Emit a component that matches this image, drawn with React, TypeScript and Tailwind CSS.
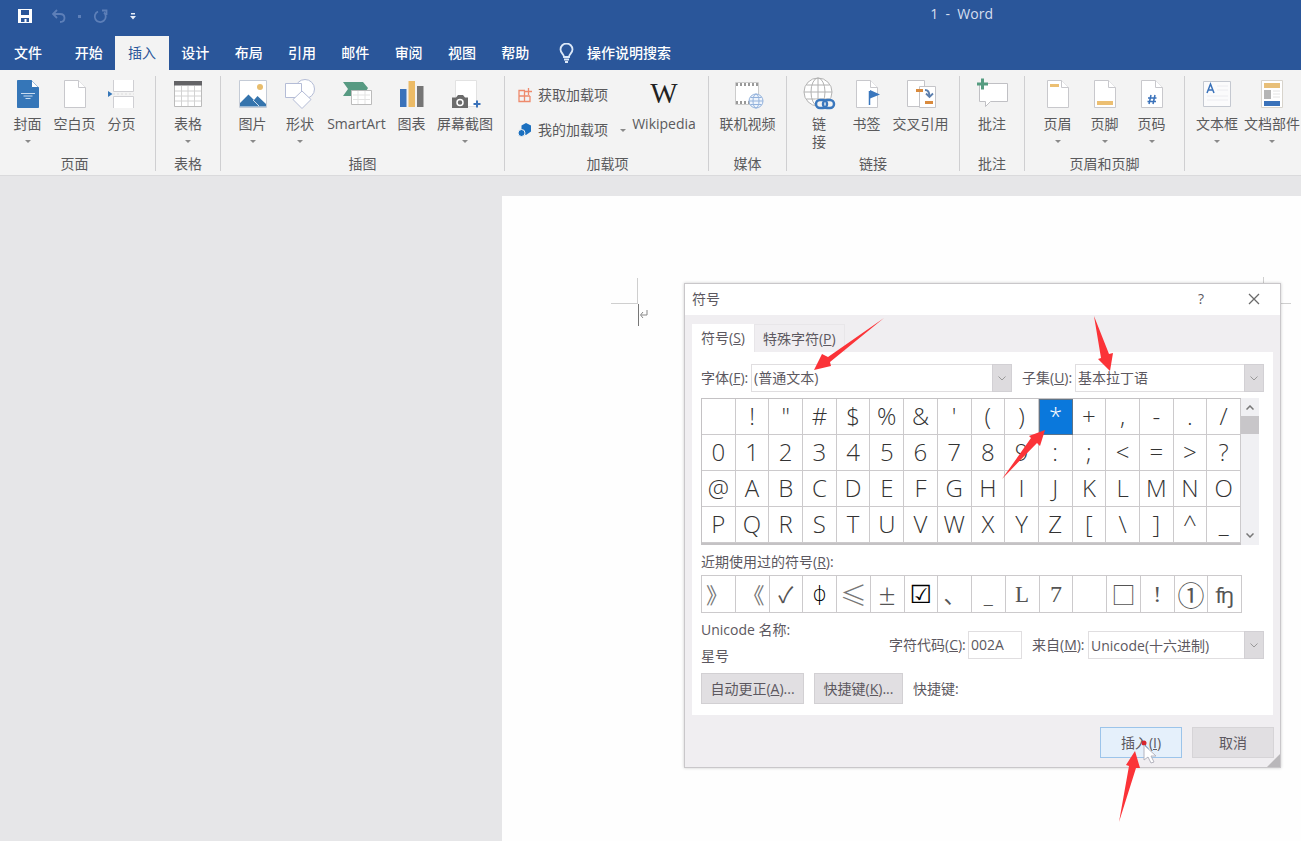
import React, { useState } from 'react';

const menuTabs = ['开始', '插入', '设计', '布局', '引用', '邮件', '审阅', '视图', '帮助'];

const symbols = ' !"#$%&\'()*+,-./0123456789:;<=>?@ABCDEFGHIJKLMNOPQRSTUVWXYZ[\\]^_'.split('');

interface RecentSymbol {
  char: string;
  className?: string;
}

const recentSymbols: RecentSymbol[] = [
  { char: '》', className: 'justify-start pl-1 text-[22px] text-[#777]' },
  { char: '《', className: 'justify-end pr-1 text-[22px] text-[#777]' },
  { char: '✓', className: 'text-[22px] text-[#333]' },
  { char: 'ɸ', className: "font-['DejaVu_Sans',sans-serif] text-[22px] font-extralight text-black" },
  { char: '≤', className: "font-['Noto_Sans_CJK_SC',sans-serif] text-[27px] font-light text-[#777]" },
  { char: '±', className: 'text-[30px] font-light' },
  { char: '☑', className: "font-['DejaVu_Sans',sans-serif] text-[25px] text-black" },
  { char: '、', className: 'text-[22px] text-[#222]' },
  { char: '_', className: 'text-[22px] font-light' },
  { char: 'L', className: "font-['Liberation_Serif',serif] text-[23px]" },
  { char: '7', className: "font-['Liberation_Serif',serif] text-[24px]" },
  { char: '' },
  { char: '□', className: "font-['Noto_Sans_CJK_SC',sans-serif] text-[24px]" },
  { char: '!', className: "font-['Liberation_Serif',serif] text-[24px]" },
  { char: '①', className: "font-['Noto_Sans_CJK_SC',sans-serif] text-[27px]" },
  { char: 'ʩ', className: "font-['Open_Sans','Noto_Sans',sans-serif] text-[22px] text-[#222]" },
];

const FoldedPage = ({ fill = '#fff', stroke = '#c8c8cc', children }: { fill?: string; stroke?: string; children?: React.ReactNode }) => (
  <svg width="30" height="32" viewBox="0 0 30 32" fill="none">
    <path d="M4.500 2.500h14l7 7v20h-21z" fill={fill} stroke={stroke} />
    <path d="M18.500 2.500v7h7" fill="#fff" stroke={stroke} />
    {children}
  </svg>
);

const CoverIcon = () => (
  <FoldedPage fill="#3576b8" stroke="#3576b8">
    <path d="M8 15.500h14M10.500 18h9M12.500 20.500h5" stroke="#c9dcf0" />
  </FoldedPage>
);

const PageBreakIcon = () => (
  <svg width="30" height="32" viewBox="0 0 30 32" fill="none">
    <path d="M6.500 2v11.500h20V2M6.500 30V18.500h20V30" fill="#fff" stroke="#cfcfd3" />
    <path d="M6 16h21" stroke="#ddd" strokeDasharray="2 2" />
    <path d="M1 13l4.500 3L1 19z" fill="#3576b8" />
  </svg>
);

const TableIcon = () => (
  <svg width="30" height="32" viewBox="0 0 30 32" fill="none">
    <path d="M1.500 3.500h27v25h-27z" fill="#fff" stroke="#bbb" />
    <path d="M1 3h28v4.500H1z" fill="#636366" />
    <path d="M2 13h26M2 18h26M2 23h26M8.500 8v20M15 8v20M21.500 8v20" stroke="#d2d2d2" />
  </svg>
);

const PictureIcon = () => (
  <svg width="30" height="32" viewBox="0 0 30 32" fill="none">
    <path d="M1.500 2.500h27v27h-27z" fill="#fff" stroke="#c4cbd6" />
    <circle cx="22" cy="9" r="3" fill="#e8bd6d" />
    <path d="M2 28.500V25l8.500-8.500 5.500 5.500 3.500-4 8.500 8v2.500z" fill="#3574ad" />
    <path d="M15 22l6 6" stroke="#cfe0ee" />
  </svg>
);

const ShapesIcon = () => (
  <svg width="32" height="32" viewBox="0 0 32 32" fill="#fff" stroke="#b4bcd6">
    <circle cx="21" cy="11" r="9.500" />
    <path d="M1.500 5.500h16v14h-16z" />
    <path d="M18 13l9 8.500-9 9-9-9z" />
  </svg>
);

const SmartArtIcon = () => (
  <svg width="32" height="32" viewBox="0 0 32 32" fill="none">
    <path d="M2 4h20l5 6-5 8H2l5-7z" fill="#579a82" />
    <path d="M10.500 12.500h20v14h-20z" fill="#fff" stroke="#bbb" />
    <path d="M12 17h17M12 21.500h17M17 13v13M24 13v13" stroke="#e3e3e3" />
  </svg>
);

const ChartIcon = () => (
  <svg width="30" height="32" viewBox="0 0 30 32">
    <path d="M3 11h6.500v18H3z" fill="#3a72ba" />
    <path d="M11.500 3H18v26h-6.500z" fill="#ecbb66" />
    <path d="M20 8h6.500v21H20z" fill="#757575" />
  </svg>
);

const ScreenshotIcon = () => (
  <svg width="32" height="32" viewBox="0 0 32 32" fill="none">
    <path d="M6.500 2.500h21v26h-21z" fill="#fff" stroke="#e2e2e2" />
    <path d="M3 19.500h4l2-2.500h5l2 2.500h3V30H3z" fill="#6b6b6b" />
    <circle cx="11" cy="24.500" r="3" stroke="#fff" strokeWidth="1.500" />
    <path d="M24.500 26h7M28 22.500v7" stroke="#3a72ba" strokeWidth="2" />
  </svg>
);

const VideoIcon = () => (
  <svg width="32" height="32" viewBox="0 0 32 32" fill="none">
    <path d="M3.500 4.500h23v22h-23z" fill="#fff" stroke="#ccc" />
    <path d="M4 6.500h22M4 24.500h22" stroke="#999" strokeWidth="3" strokeDasharray="2 2" />
    <g stroke="#93b2dc">
      <circle cx="24" cy="23" r="7" fill="#eef4fc" />
      <ellipse cx="24" cy="23" rx="3" ry="7" />
      <path d="M17 23h14M18.500 19.500h11M18.500 26.500h11" />
    </g>
  </svg>
);

const LinkIcon = () => (
  <svg width="34" height="34" viewBox="0 0 34 34" fill="none">
    <g stroke="#b2b2b2">
      <circle cx="16" cy="15" r="14" fill="#fff" />
      <ellipse cx="16" cy="15" rx="7" ry="14" />
      <path d="M2 15h28M4.500 8h23M4.500 22h23M16 1v28" />
    </g>
    <path d="M13 22.500h18v9H13z" fill="#f3f3f3" />
    <g stroke="#3a77bd" strokeWidth="2.500">
      <rect x="14" y="23" width="11" height="8" rx="4" />
      <rect x="21" y="23" width="11" height="8" rx="4" />
    </g>
  </svg>
);

const BookmarkIcon = () => (
  <FoldedPage>
    <path d="M17.500 13v14" stroke="#3a77bd" strokeWidth="1.500" />
    <path d="M18 12l10 4.500-10 4z" fill="#3a77bd" />
  </FoldedPage>
);

const CrossRefIcon = () => (
  <svg width="32" height="32" viewBox="0 0 32 32" fill="none">
    <path d="M2.500 2.500h17v26h-17z" fill="#fff" stroke="#c4c4c8" />
    <path d="M14.500 8.500h16v21h-16z" fill="#fff" stroke="#c4c4c8" />
    <path d="M11 12.500h7M20 24.500h8" stroke="#d98a3d" strokeWidth="3" />
    <path d="M20 12c3 0 4.500 2 4.500 6.500M21 15.500l3.500 3.500 3.500-3.500" stroke="#5c7fae" strokeWidth="1.800" />
  </svg>
);

const CommentIcon = () => (
  <svg width="34" height="32" viewBox="0 0 34 32" fill="none">
    <path d="M4.500 5.500h28v18h-17l-5 5v-5h-6z" fill="#fff" stroke="#c0c0c4" />
    <path d="M2 6h11M7.500.500v11" stroke="#559c80" strokeWidth="3" />
  </svg>
);

const HeaderIcon = () => (
  <FoldedPage>
    <path d="M7 7.500h9" stroke="#ecbf72" strokeWidth="3" />
  </FoldedPage>
);

const FooterIcon = () => (
  <FoldedPage>
    <path d="M7 25h16" stroke="#ecbf72" strokeWidth="4" />
  </FoldedPage>
);

const PageNumberIcon = () => (
  <FoldedPage>
    <path d="M14 17l-2 9M18 17l-2 9M11 20h8.500M10.500 23.500H19" stroke="#3a72ba" strokeWidth="1.500" />
  </FoldedPage>
);

const TextBoxIcon = () => (
  <svg width="32" height="32" viewBox="0 0 32 32" fill="none">
    <path d="M2.500 3.500h27v25h-27z" fill="#fbfbfc" stroke="#c4c8d0" />
    <path d="M6 15l3.500-9 3.500 9M7.300 12h4.500" stroke="#3a72ba" strokeWidth="1.500" />
    <path d="M16 8h11M16 12h11M6 18h21M6 22h21" stroke="#ececf0" />
  </svg>
);

const QuickPartsIcon = () => (
  <svg width="30" height="32" viewBox="0 0 30 32" fill="none">
    <path d="M4.500 2.500h21v27h-21z" fill="#fff" stroke="#d8d4cc" />
    <path d="M7 5h16v5H7z" fill="#e8bf78" />
    <path d="M7 12h7v9H7z" fill="#b5b5b5" />
    <path d="M16 13h7M16 16h7M16 19h7" stroke="#e4e4e4" />
    <path d="M7 23h16v5H7z" fill="#3a72ba" />
  </svg>
);

interface RibbonButtonProps {
  label: string;
  width: string;
  icon: React.ReactNode;
  caret?: boolean;
}

const RibbonButton: React.FC<RibbonButtonProps> = ({ label, width, icon, caret }) => (
  <button className={`flex flex-col items-center ${width}`}>
    <span className="flex h-9 items-center justify-center">{icon}</span>
    <span className="mt-[3px] leading-[18px]">{label}</span>
    {caret && <span className="mt-[7px] border-x-[3px] border-t-[3px] border-x-transparent border-t-[#8a8a8a]" />}
  </button>
);

interface RibbonGroupProps {
  label: string;
  className?: string;
  children: React.ReactNode;
}

const RibbonGroup: React.FC<RibbonGroupProps> = ({ label, className = 'px-2', children }) => (
  <section className={`flex shrink-0 flex-col border-r border-[#cfcfd1] ${className}`}>
    <div className="flex h-20 shrink-0 items-start whitespace-nowrap">{children}</div>
    <h2 className="text-center leading-4">{label}</h2>
  </section>
);

interface SelectBoxProps {
  id: string;
  options: string[];
  className: string;
}

const SelectBox: React.FC<SelectBoxProps> = ({ id, options, className }) => (
  <div className={`relative h-7 ${className}`}>
    <select id={id} className="h-full w-full appearance-none border border-[#e0dee0] bg-white pr-6 pl-[2px]">
      {options.map((option) => (
        <option key={option}>{option}</option>
      ))}
    </select>
    <span className="pointer-events-none absolute inset-y-0 right-0 flex w-5 items-center justify-center border border-[#d2d0d4] bg-[#dddbde]">
      <svg width="8" height="5" viewBox="0 0 8 5" fill="none" stroke="#999">
        <path d="M.5.500L4 4 7.500.500" />
      </svg>
    </span>
  </div>
);

const SymbolDialog = () => {
  const [selected, setSelected] = useState('*');

  return (
    <div
      role="dialog"
      aria-labelledby="dialog-title"
      className="absolute top-[283px] left-[684px] w-[597px] border border-[#c9c7ca] bg-[#f0eef1] pb-[9px] text-[#5c5860] shadow-[0_0_3px_rgba(0,0,0,0.2)]"
    >
      <header className="flex h-[31px] items-center bg-white pr-5 pb-[2px] pl-[7px]">
        <h1 id="dialog-title">符号</h1>
        <button aria-label="帮助" className="ml-auto">?</button>
        <button aria-label="关闭" className="ml-11">
          <svg width="12" height="12" viewBox="0 0 12 12" stroke="#6a6a6a" strokeWidth="1.300">
            <path d="M1 1l10 10M11 1L1 11" />
          </svg>
        </button>
      </header>

      <div className="px-[7px] pt-[9px]">
        <div role="tablist" className="flex h-7 items-stretch">
          <button role="tab" aria-selected="true" className="bg-white px-[9px]">
            符号(<u>S</u>)
          </button>
          <button role="tab" aria-selected="false" className="border border-b-0 border-[#e8e6e9] px-2">
            特殊字符(<u>P</u>)
          </button>
        </div>

        <div className="bg-white px-[9px] pt-3 pb-[11px]">
          <div className="flex items-center">
            <label htmlFor="font" className="w-[50px] whitespace-nowrap">字体(<u>F</u>):</label>
            <SelectBox id="font" options={['(普通文本)']} className="flex-1" />
            <label htmlFor="subset" className="ml-[10px] w-[53px] whitespace-nowrap">子集(<u>U</u>):</label>
            <SelectBox id="subset" options={['基本拉丁语']} className="w-[189px]" />
          </div>

          <div className="mt-[6px] flex pr-[5px]">
            <div className="grid flex-1 grid-cols-16 border-t border-b-2 border-l border-[#c4c2c4]">
              {symbols.map((symbol) => (
                <button
                  key={symbol}
                  onClick={() => setSelected(symbol)}
                  className={`flex h-9 items-center justify-center pb-[2px] font-['Open_Sans','Noto_Sans_CJK_SC',sans-serif] text-[24px] leading-none font-light ${
                    symbol === selected
                      ? 'border border-[#5d7388] bg-[#0a78dc] text-white'
                      : 'border-r border-b border-[#cccacc] text-[#333]'
                  }`}
                >
                  {symbol}
                </button>
              ))}
            </div>
            <div className="flex w-[18px] flex-col items-center bg-[#f0f0f3] py-[7px]">
              <svg width="8" height="5" viewBox="0 0 8 5" fill="none" stroke="#777" strokeWidth="1.500">
                <path d="M.5 4.500L4 1l3.500 3.500" />
              </svg>
              <span className="mt-[6px] h-[18px] w-full bg-[#c8c6c9]" />
              <svg className="mt-auto" width="8" height="5" viewBox="0 0 8 5" fill="none" stroke="#777" strokeWidth="1.500">
                <path d="M.5.500L4 4 7.500.500" />
              </svg>
            </div>
          </div>

          <h2 className="mt-[7px] leading-5">近期使用过的符号(<u>R</u>):</h2>
          <div className="mt-[3px] mr-[22px] grid grid-cols-16 border-y border-l border-[#cccacc]">
            {recentSymbols.map(({ char, className = '' }, i) => (
              <button
                key={i}
                className={`flex h-9 items-center justify-center overflow-hidden border-r border-[#cccacc] leading-none text-[#555] ${className}`}
              >
                {char}
              </button>
            ))}
          </div>

          <div className="mt-[7px] flex h-[46px]">
            <div className="leading-5">
              <p>Unicode 名称:</p>
              <p className="mt-[6px]">星号</p>
            </div>
            <div className="mt-[11px] ml-auto flex items-start leading-7">
              <label htmlFor="code" className="w-[79px] whitespace-nowrap">字符代码(<u>C</u>):</label>
              <input id="code" defaultValue="002A" className="h-7 w-[54px] border border-[#e0dee0] bg-white px-[2px]" />
              <label htmlFor="from" className="ml-[10px] w-[56px] whitespace-nowrap">来自(<u>M</u>):</label>
              <SelectBox id="from" options={['Unicode(十六进制)']} className="w-[176px]" />
            </div>
          </div>

          <div className="mt-[7px] flex items-center gap-[10px]">
            <button className="h-[31px] w-[103px] border border-[#d2d0d3] bg-[#e1dfe2]">自动更正(<u>A</u>)...</button>
            <button className="h-[31px] w-[89px] border border-[#d2d0d3] bg-[#e1dfe2]">快捷键(<u>K</u>)...</button>
            <span>快捷键:</span>
          </div>
        </div>
      </div>

      <footer className="mt-3 flex justify-end gap-[10px] pr-[6px]">
        <button className="h-[31px] w-[82px] border border-[#9cc4ea] bg-[#e5f0fb]">插入(<u>I</u>)</button>
        <button className="h-[31px] w-[82px] border border-[#d6d4d7] bg-[#e1dfe2]">取消</button>
      </footer>
      <svg className="absolute right-0 bottom-0" width="13" height="13" viewBox="0 0 13 13">
        <path d="M13 0v13H0z" fill="#b9b7ba" />
      </svg>
    </div>
  );
};

// Red pointer arrows and the mouse cursor, drawn over everything
const Annotations = () => (
  <svg className="pointer-events-none absolute inset-0 h-full w-full">
    <g fill="#fb3338">
      <path d="M884 318L828 357 822 354 814 370 831 366 830 362z" />
      <path d="M1094 316L1109 354 1113 353 1110 371 1098 359 1101 358z" />
      <path d="M1002 479L1031 438 1029 436 1045 430 1040 446 1037 443z" />
      <path d="M1119 822L1129 766 1126 765 1135 751 1140 768 1136 768z" />
    </g>
    <circle cx="1144" cy="743" r="2.500" fill="#d8262c" />
    <path d="M1144 745v15l4-3 3 6 3-1-3-6h5z" fill="#fff" stroke="#b4b4be" />
  </svg>
);

const App = () => (
  <div className="relative flex min-h-screen flex-col overflow-hidden bg-[#e6e6e8] font-['Open_Sans','Noto_Sans_CJK_SC',sans-serif] text-sm">
    <header className="bg-[#2a569a] text-white">
      <div className="flex h-9 items-center pb-1 pl-[18px]">
        <button aria-label="保存">
          <svg width="14" height="14" viewBox="0 0 14 14">
            <path d="M0 0h14v14H0z" fill="#fff" />
            <path d="M3 1h8v5H3zM3 9h8v4H8.500v-3h-2v3H3z" fill="#2a569a" />
          </svg>
        </button>
        <button aria-label="撤消" className="ml-5">
          <svg width="14" height="14" viewBox="0 0 14 14" fill="none" stroke="#5d7fb8" strokeWidth="1.800">
            <path d="M5 1L1 5l4 4M1 5h7c6 0 6 8 0 8" />
          </svg>
        </button>
        <span className="ml-3 size-[3px] bg-[#5d7fb8]" />
        <button aria-label="恢复" className="ml-3">
          <svg width="15" height="15" viewBox="0 0 15 15" fill="none" stroke="#5d7fb8" strokeWidth="1.800">
            <path d="M5 2.500a5.500 5.500 0 1 0 6 1M9 1.500h4.500V6" />
          </svg>
        </button>
        <button aria-label="自定义快速访问工具栏" className="ml-[22px]">
          <svg width="6" height="7" viewBox="0 0 6 7" fill="#e6edf8">
            <path d="M1 0h4v1.500H1zM0 3h6L3 6.500z" />
          </svg>
        </button>
        <span className="mr-[308px] mb-1 ml-auto whitespace-pre text-[#d5dfef]">1  -  Word</span>
      </div>
      <nav className="flex h-[34px] items-stretch font-medium">
        <button className="w-14">文件</button>
        <div className="ml-[6px] flex w-[480px]">
          {menuTabs.map((tab) => (
            <button key={tab} className={`flex-1 ${tab === '插入' ? 'bg-[#f3f3f3] font-normal text-[#2a569a]' : ''}`}>
              {tab}
            </button>
          ))}
        </div>
        <button className="ml-[17px] flex items-center gap-[13px]">
          <svg width="15" height="20" viewBox="0 0 15 20" fill="none" stroke="#dbe8f8" strokeWidth="1.800">
            <path d="M5 14c0-3-3.500-4-3.500-7.500a6 6 0 0 1 12 0C13.500 10 10 11 10 14zM5 16.500h5M6 19h3" />
          </svg>
          操作说明搜索
        </button>
      </nav>
    </header>

    <div className="flex h-[106px] overflow-hidden border-b border-[#dadadc] bg-[#f3f3f3] pt-[6px] pb-1 text-[#5a5a5c]">
      <RibbonGroup label="页面" className="pr-[10px] pl-1">
        <RibbonButton label="封面" width="w-[47px]" icon={<CoverIcon />} caret />
        <RibbonButton label="空白页" width="w-[47px]" icon={<FoldedPage />} />
        <RibbonButton label="分页" width="w-[47px]" icon={<PageBreakIcon />} />
      </RibbonGroup>
      <RibbonGroup label="表格">
        <RibbonButton label="表格" width="w-12" icon={<TableIcon />} caret />
      </RibbonGroup>
      <RibbonGroup label="插图">
        <RibbonButton label="图片" width="w-[47px]" icon={<PictureIcon />} caret />
        <RibbonButton label="形状" width="w-12" icon={<ShapesIcon />} caret />
        <RibbonButton label="SmartArt" width="w-[65px]" icon={<SmartArtIcon />} />
        <RibbonButton label="图表" width="w-[45px]" icon={<ChartIcon />} />
        <RibbonButton label="屏幕截图" width="w-[62px]" icon={<ScreenshotIcon />} caret />
      </RibbonGroup>
      <RibbonGroup label="加载项" className="pr-[6px] pl-2">
        <div className="flex flex-col items-start gap-[15px] pt-[9px] pl-[5px] leading-5">
          <button className="flex items-center gap-[6px]">
            <svg width="14" height="15" viewBox="0 0 14 15" fill="none" stroke="#ee8a6c" strokeWidth="1.300">
              <path d="M7 2.500H1v11h11V8M1 8h11M6.500 2.500v11M10.500 0v7M7 3.500h7" />
            </svg>
            获取加载项
          </button>
          <button className="flex items-center gap-[6px]">
            <svg width="14" height="14" viewBox="0 0 14 14" fill="#1b70c0">
              <path d="M8 0l5 2.500v6L8 12 3.500 9V2.500z" />
              <circle cx="3.500" cy="10" r="3.500" stroke="#f3f3f3" />
            </svg>
            我的加载项
            <span className="ml-[6px] border-x-[3px] border-t-[3px] border-x-transparent border-t-[#8a8a8a]" />
          </button>
        </div>
        <RibbonButton
          label="Wikipedia"
          width="w-[76px]"
          icon={<span className="font-['Liberation_Serif',serif] text-[29px] text-[#222]">W</span>}
        />
      </RibbonGroup>
      <RibbonGroup label="媒体">
        <RibbonButton label="联机视频" width="w-[61px]" icon={<VideoIcon />} />
      </RibbonGroup>
      <RibbonGroup label="链接">
        <RibbonButton label="链 接" width="w-12 whitespace-normal px-4" icon={<LinkIcon />} />
        <RibbonButton label="书签" width="w-[47px]" icon={<BookmarkIcon />} />
        <RibbonButton label="交叉引用" width="w-[61px]" icon={<CrossRefIcon />} />
      </RibbonGroup>
      <RibbonGroup label="批注">
        <RibbonButton label="批注" width="w-12" icon={<CommentIcon />} />
      </RibbonGroup>
      <RibbonGroup label="页眉和页脚" className="px-[9px]">
        <RibbonButton label="页眉" width="w-[47px]" icon={<HeaderIcon />} caret />
        <RibbonButton label="页脚" width="w-[47px]" icon={<FooterIcon />} caret />
        <RibbonButton label="页码" width="w-[47px]" icon={<PageNumberIcon />} caret />
      </RibbonGroup>
      <RibbonGroup label="" className="pr-2 pl-[5px]">
        <RibbonButton label="文本框" width="w-[54px]" icon={<TextBoxIcon />} caret />
        <RibbonButton label="文档部件" width="w-[56px]" icon={<QuickPartsIcon />} caret />
      </RibbonGroup>
    </div>

    <main className="flex flex-1 pt-5 pl-[502px]">
      <div className="flex-1 bg-[#fefefe]">
        <svg className="h-full w-full" fill="none">
          <path d="M135.500 82v25M109 107.500h27M761.500 81v27M762 107.500h27" stroke="#cfcfcf" />
          <path d="M136.500 108v22" stroke="#777" />
          <path d="M145 114v5h-6M141 116l-2.500 3 2.500 3" stroke="#888" />
        </svg>
      </div>
    </main>

    <SymbolDialog />
    <Annotations />
  </div>
);

export default App;
